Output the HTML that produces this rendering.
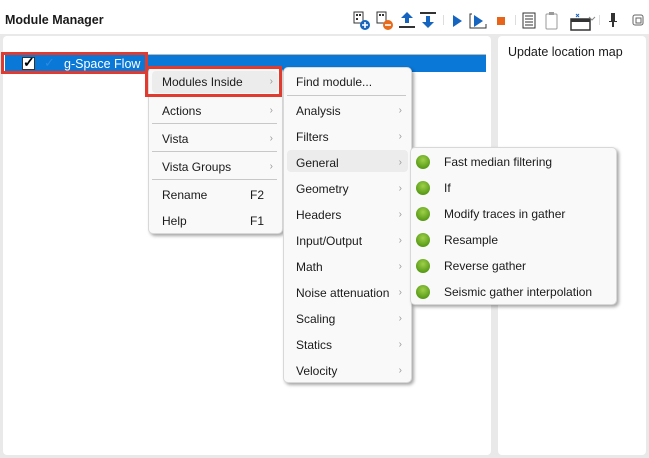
<!DOCTYPE html>
<html><head><meta charset="utf-8"><style>
*{box-sizing:border-box;margin:0;padding:0}
body{width:649px;height:458px;background:#fff;font-family:"Liberation Sans",sans-serif;font-size:12px;color:#1a1a1a;position:relative;overflow:hidden}
.abs{position:absolute}
.title{left:5px;top:13px;font-weight:bold;font-size:12.5px}
.menu{position:absolute;background:#f9f9f9;border:1px solid #d8d8d8;border-radius:5px;box-shadow:2px 2px 3px rgba(0,0,0,.35)}
.it{position:absolute;left:0;right:0;height:24px;line-height:24px}
.it .t{position:absolute}
.it .a{position:absolute;right:9px;color:#999;font-size:10px}
.sep{position:absolute;height:1px;background:#c8c8c8}
.hl{position:absolute;background:#ececec;border-radius:4px}
.dot{position:absolute;left:5px;width:14px;height:14px;border-radius:50%;background:radial-gradient(circle at 50% 35%,#9fd04a,#5a9d18 70%,#4a8a10);top:5px}
</style></head><body>
<div class="abs title">Module Manager</div>
<!-- toolbar -->
<svg class="abs" style="left:350px;top:8px" width="299" height="24" viewBox="0 0 299 24">
<g fill="#333"><rect x="4" y="4" width="9" height="11" fill="none" stroke="#333"/><rect x="6" y="6" width="2" height="2"/><rect x="9" y="6" width="2" height="2"/><rect x="6" y="10" width="2" height="2"/></g>
<circle cx="15" cy="17" r="5" fill="#1565c0"/><path d="M12 17h6M15 14v6" stroke="#fff" stroke-width="1.6"/>
<g fill="#333"><rect x="27" y="4" width="9" height="11" fill="none" stroke="#333"/><rect x="29" y="6" width="2" height="2"/><rect x="32" y="6" width="2" height="2"/></g>
<circle cx="38" cy="17" r="5" fill="#e86a1a"/><path d="M35 17h6" stroke="#fff" stroke-width="1.6"/>
<path d="M57 4l-6 6h4v5h4v-5h4z" fill="#1565c0"/><rect x="49" y="18" width="16" height="2" fill="#333"/><rect x="49" y="18" width="3" height="2" fill="#333"/>
<rect x="70" y="4" width="16" height="2" fill="#333"/><path d="M78 20l6-6h-4v-6h-4v6h-4z" fill="#1565c0"/>
<rect x="93" y="7" width="1" height="10" fill="#ddd"/>
<path d="M103 7l9 6-9 6z" fill="#1565c0"/>
<path d="M122 6h-2v14h16v-4" fill="none" stroke="#333"/><path d="M124 7l9 6-9 6z" fill="#1565c0"/>
<rect x="147" y="9" width="8" height="8" fill="#e8641a"/>
<rect x="165" y="7" width="1" height="10" fill="#ddd"/>
<rect x="173" y="5" width="12" height="15" fill="#fff" stroke="#333"/><path d="M175 8h8M175 11h8M175 14h8M175 17h8" stroke="#333"/>
<rect x="196" y="6" width="11" height="15" rx="1" fill="none" stroke="#999"/><rect x="199" y="4" width="5" height="3" fill="#999"/>
<rect x="221" y="11" width="19" height="11" fill="none" stroke="#333" stroke-width="1.5"/><rect x="221" y="11" width="19" height="3" fill="#333"/><path d="M226 6l3 3M229 6l-3 3" stroke="#1565c0"/><path d="M239 9l3 3 3-3" fill="none" stroke="#888"/>
<rect x="249" y="7" width="1" height="10" fill="#ddd"/>
<path d="M261 5h4v8h2v1h-3v5h-2v-5h-3v-1h2z" fill="#333"/>
<rect x="283" y="7" width="10" height="10" rx="2" fill="none" stroke="#666"/><rect x="286" y="10" width="5" height="5" fill="none" stroke="#666"/>
</svg>
<!-- panels -->
<div class="abs" style="left:0;top:34px;width:649px;height:424px;background:#e9e9e9"></div>
<div class="abs" style="left:3px;top:36px;width:488px;height:419px;background:#fff;border-radius:4px"></div>
<div class="abs" style="left:498px;top:36px;width:148px;height:419px;background:#fff;border-radius:4px"></div>
<div class="abs" style="left:508px;top:45px;font-size:12.5px">Update location map</div>
<div class="abs" style="left:5px;top:54px;width:481px;height:1px;background:#b8b8b8"></div>
<div class="abs" style="left:5px;top:55px;width:481px;height:17px;background:#0a78d7"></div>
<div class="abs" style="left:22px;top:57px;width:13px;height:13px;background:#fff;border:1px solid #333"></div>
<div class="abs" style="left:23px;top:54px;font-size:14px;font-weight:bold;color:#000">✓</div>
<div class="abs" style="left:44px;top:55px;font-size:13px;color:#2b8be0">✓</div>
<div class="abs" style="left:64px;top:57px;color:#fff;font-size:12.5px">g-Space Flow</div>
<div class="abs" style="left:1px;top:52px;width:147px;height:22px;border:3px solid #e13b2f"></div>
<!-- menu 1 -->
<div class="menu" style="left:148px;top:67px;width:135px;height:167px">
<div class="hl" style="left:3px;top:3px;width:126px;height:22px"></div>
<div class="it" style="top:2px"><span class="t" style="left:13px">Modules Inside</span><span class="a">›</span></div>
<div class="it" style="top:31px"><span class="t" style="left:13px">Actions</span><span class="a">›</span></div>
<div class="sep" style="left:3px;right:5px;top:55px"></div>
<div class="it" style="top:59px"><span class="t" style="left:13px">Vista</span><span class="a">›</span></div>
<div class="sep" style="left:3px;right:5px;top:83px"></div>
<div class="it" style="top:87px"><span class="t" style="left:13px">Vista Groups</span><span class="a">›</span></div>
<div class="sep" style="left:3px;right:5px;top:111px"></div>
<div class="it" style="top:115px"><span class="t" style="left:13px">Rename</span><span class="t" style="left:101px">F2</span></div>
<div class="it" style="top:141px"><span class="t" style="left:13px">Help</span><span class="t" style="left:101px">F1</span></div>
</div>
<div class="abs" style="left:145px;top:66px;width:137px;height:31px;border:3px solid #e13b2f"></div>
<!-- menu 2 -->
<div class="menu" style="left:283px;top:67px;width:129px;height:316px">
<div class="it" style="top:2px"><span class="t" style="left:12px">Find module...</span></div>
<div class="sep" style="left:3px;right:5px;top:27px"></div>
<div class="hl" style="left:3px;top:82px;width:121px;height:22px"></div>
<div class="it" style="top:31px"><span class="t" style="left:12px">Analysis</span><span class="a">›</span></div>
<div class="it" style="top:57px"><span class="t" style="left:12px">Filters</span><span class="a">›</span></div>
<div class="it" style="top:83px"><span class="t" style="left:12px">General</span><span class="a">›</span></div>
<div class="it" style="top:109px"><span class="t" style="left:12px">Geometry</span><span class="a">›</span></div>
<div class="it" style="top:135px"><span class="t" style="left:12px">Headers</span><span class="a">›</span></div>
<div class="it" style="top:161px"><span class="t" style="left:12px">Input/Output</span><span class="a">›</span></div>
<div class="it" style="top:187px"><span class="t" style="left:12px">Math</span><span class="a">›</span></div>
<div class="it" style="top:213px"><span class="t" style="left:12px">Noise attenuation</span><span class="a">›</span></div>
<div class="it" style="top:239px"><span class="t" style="left:12px">Scaling</span><span class="a">›</span></div>
<div class="it" style="top:265px"><span class="t" style="left:12px">Statics</span><span class="a">›</span></div>
<div class="it" style="top:291px"><span class="t" style="left:12px">Velocity</span><span class="a">›</span></div>
</div>
<!-- menu 3 -->
<div class="menu" style="left:410px;top:147px;width:207px;height:158px">
<div class="it" style="top:2px"><span class="dot"></span><span class="t" style="left:33px">Fast median filtering</span></div>
<div class="it" style="top:28px"><span class="dot"></span><span class="t" style="left:33px">If</span></div>
<div class="it" style="top:54px"><span class="dot"></span><span class="t" style="left:33px">Modify traces in gather</span></div>
<div class="it" style="top:80px"><span class="dot"></span><span class="t" style="left:33px">Resample</span></div>
<div class="it" style="top:106px"><span class="dot"></span><span class="t" style="left:33px">Reverse gather</span></div>
<div class="it" style="top:132px"><span class="dot"></span><span class="t" style="left:33px">Seismic gather interpolation</span></div>
</div>
</body></html>
